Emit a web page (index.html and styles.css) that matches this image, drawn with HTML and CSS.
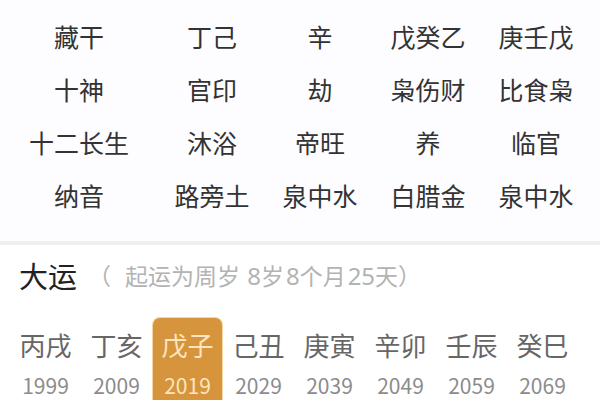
FILE: index.html
```html
<!DOCTYPE html>
<html lang="zh-CN">
<head>
<meta charset="utf-8">
<title>八字</title>
<link rel="stylesheet" href="styles.css">
</head>
<body>
<div class="page">
  <section class="pillars">
    <div class="grid">
      <div class="cell label">藏干</div><div class="cell">丁己</div><div class="cell">辛</div><div class="cell">戊癸乙</div><div class="cell">庚壬戊</div>
      <div class="cell label">十神</div><div class="cell">官印</div><div class="cell">劫</div><div class="cell">枭伤财</div><div class="cell">比食枭</div>
      <div class="cell label">十二长生</div><div class="cell">沐浴</div><div class="cell">帝旺</div><div class="cell">养</div><div class="cell">临官</div>
      <div class="cell label">纳音</div><div class="cell">路旁土</div><div class="cell">泉中水</div><div class="cell">白腊金</div><div class="cell">泉中水</div>
    </div>
  </section>
  <div class="divider"></div>
  <section class="dayun">
    <div class="title-row">
      <span class="title">大运</span>
      <span class="subtitle"><span class="paren">（</span>起运为周岁 <span class="num">8</span>岁<span class="num">8</span>个月<span class="num">25</span>天）</span>
    </div>
    <div class="yun-list">
      <div class="yun"><div class="gz">丙戌</div><div class="yr">1999</div></div>
      <div class="yun"><div class="gz">丁亥</div><div class="yr">2009</div></div>
      <div class="yun active"><div class="gz">戊子</div><div class="yr">2019</div></div>
      <div class="yun"><div class="gz">己丑</div><div class="yr">2029</div></div>
      <div class="yun"><div class="gz">庚寅</div><div class="yr">2039</div></div>
      <div class="yun"><div class="gz">辛卯</div><div class="yr">2049</div></div>
      <div class="yun"><div class="gz">壬辰</div><div class="yr">2059</div></div>
      <div class="yun"><div class="gz">癸巳</div><div class="yr">2069</div></div>
    </div>
  </section>
</div>
</body>
</html>
```
FILE: styles.css
```css
html, body {
  margin: 0;
  padding: 0;
  background: #ffffff;
}
body {
  width: 600px;
  height: 400px;
  overflow: hidden;
  font-family: "Noto Sans CJK SC", "Noto Sans", sans-serif;
}
.page {
  display: flex;
  flex-direction: column;
}
.pillars {
  background: #fdfcfe;
  padding: 10px 0 19px 0;
}
.grid {
  display: grid;
  grid-template-columns: 158px repeat(4, 108px);
  grid-auto-rows: 53px;
}
.cell {
  font-size: 25px;
  line-height: 53px;
  color: #333333;
  text-align: center;
  white-space: nowrap;
}
.divider {
  height: 4px;
  background: #efeff1;
  box-shadow: 0 1px 2px rgba(0,0,0,0.04);
}
.dayun {
  background: #ffffff;
  padding: 10px 0 0 0;
}
.title-row {
  display: flex;
  align-items: center;
  height: 40px;
  padding-left: 19px;
  white-space: nowrap;
}
.title {
  font-size: 29px;
  color: #222222;
  line-height: 40px;
}
.subtitle {
  font-size: 23px;
  color: #b3b3b3;
  line-height: 40px;
  margin-left: 11px;
}
.paren {
  margin-right: 14px;
}
.num {
  font-family: "Noto Sans", sans-serif;
  font-size: 24px;
  margin-left: 2px;
}
.yun-list {
  display: flex;
  margin-top: 23px;
  padding-left: 10px;
}
.yun {
  width: 71px;
  display: flex;
  flex-direction: column;
  align-items: center;
  padding-top: 7px;
  height: 82px;
  box-sizing: border-box;
}
.gz {
  font-size: 26px;
  line-height: 40px;
  color: #666666;
}
.yr {
  font-size: 21px;
  line-height: 20px;
  margin-top: 10px;
  color: #8c8c8c;
}
.yun.active {
  background: #d6943c;
  border-radius: 7px 7px 0 0;
  box-shadow: 0 0 0 1px #f3d6a2;
  width: 69px;
  margin: 0 1px;
}
.yun.active .gz,
.yun.active .yr {
  color: #fde6bf;
}
```
